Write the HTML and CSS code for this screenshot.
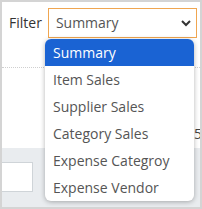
FILE: index.html
```html
<!DOCTYPE html>
<html>
<head>
<meta charset="utf-8">
<link rel="stylesheet" href="styles.css">
</head>
<body>
<div class="frame">
  <div class="top">
    <div class="filter-row">
      <span class="label">Filter</span>
      <div class="select">
        <span class="select-text">Summary</span>
        <svg class="chev" width="10" height="7" viewBox="0 0 10 7"><polyline points="1,1 5,5 9,1" fill="none" stroke="#333" stroke-width="2"/></svg>
      </div>
    </div>
  </div>
  <div class="middle">
    <span class="peek">5</span>
  </div>
  <div class="band">
    <div class="input"></div>
  </div>
  <ul class="dropdown">
    <li class="active">Summary</li>
    <li>Item Sales</li>
    <li>Supplier Sales</li>
    <li>Category Sales</li>
    <li>Expense Categroy</li>
    <li>Expense Vendor</li>
  </ul>
</div>
</body>
</html>
```

FILE: styles.css
```css
* { box-sizing: border-box; }
html, body { margin: 0; padding: 0; }
body {
  font-family: "Open Sans", "Noto Sans", sans-serif;
  font-size: 14px;
  background: #fff;
}
.frame {
  position: relative;
  width: 202px;
  height: 209px;
  border: 2px solid #d4d4d4;
  overflow: hidden;
  display: flex;
  flex-direction: column;
  background: #fff;
}
.top {
  height: 66px;
  border-bottom: 1px dotted #cfcfcf;
  padding: 6px 0 0 7px;
}
.filter-row {
  display: flex;
  align-items: center;
  gap: 6px;
}
.label {
  color: #333;
  line-height: 30px;
}
.select {
  width: 149px;
  height: 30px;
  border: 1px solid #f0a650;
  display: flex;
  align-items: center;
  justify-content: space-between;
  padding: 0 5px 0 7px;
  color: #555;
}
.select-text { line-height: 28px; }
.chev { margin-top: 1px; }
.middle {
  height: 80px;
  position: relative;
}
.peek {
  position: absolute;
  left: 192px;
  top: 56px;
  color: #444;
  line-height: 20px;
}
.band {
  flex: 1;
  background: #e9ecef;
  padding-top: 14px;
}
.input {
  width: 31px;
  height: 30px;
  background: #fff;
  border: 1px solid #cfd4d8;
  border-left: none;
}
.dropdown {
  position: absolute;
  left: 43px;
  top: 37px;
  width: 149px;
  margin: 0;
  padding: 0;
  list-style: none;
  background: #fff;
  border-radius: 6px;
  box-shadow: 0 1px 5px rgba(0,0,0,0.3);
  overflow: hidden;
}
.dropdown li {
  height: 27px;
  line-height: 27px;
  padding-left: 8px;
  color: #555;
}
.dropdown li.active {
  background: #1a63d3;
  color: #fff;
}
```
